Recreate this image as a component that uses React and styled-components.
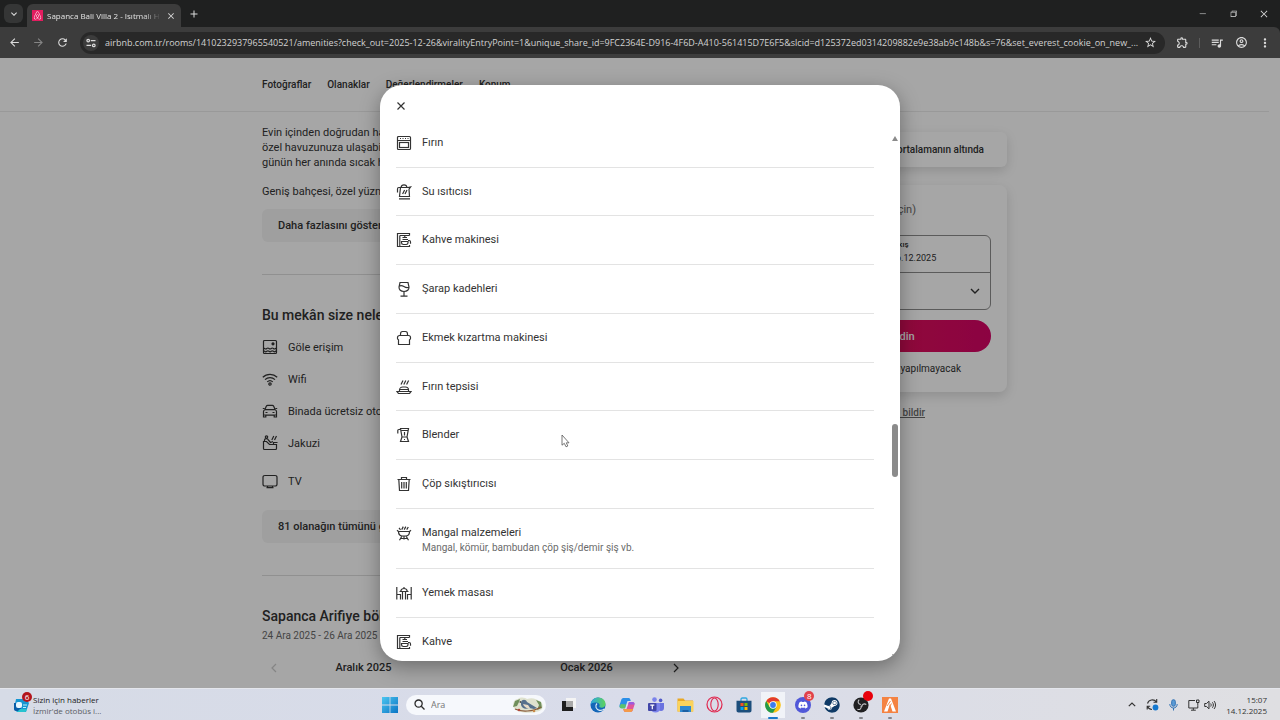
import React from "react";
import styled, { createGlobalStyle, css } from "styled-components";
import {
  MdArrowBack,
  MdArrowForward,
  MdRefresh,
  MdStarBorder,
  MdOutlineExtension,
  MdQueueMusic,
  MdOutlineAccountCircle,
  MdMoreVert,
  MdClose,
  MdAdd,
  MdKeyboardArrowDown,
} from "react-icons/md";
import { VscChromeMinimize, VscChromeRestore, VscChromeClose } from "react-icons/vsc";
import { FaAirbnb, FaDiscord, FaSteam } from "react-icons/fa";

const url =
  "airbnb.com.tr/rooms/1410232937965540521/amenities?check_out=2025-12-26&viralityEntryPoint=1&unique_share_id=9FC2364E-D916-4F6D-A410-561415D7E6F5&slcid=d125372ed0314209882e9e38ab9c148b&s=76&set_everest_cookie_on_new_...";

// 16x16 line drawings
const drawings = {
  oven: (
    <>
      <rect x="1.5" y="1.5" width="13" height="13" rx="1" />
      <path d="M1.5 5.5h13M4 3.5h1M6.5 3.5h1M9 3.5h1M11.5 3.5h1" />
      <rect x="3.5" y="7.5" width="9" height="5" />
    </>
  ),
  kettle: (
    <>
      <path d="M4.500 3.500h7.500l2.600-.6-1.600 2.200.5 7.400H3.500z" />
      <path d="M5 3.500C5.500 0 10.500 0 11 3.500M4.300 3.500H2.800c-1 0-1.300.6-1.300 1.400V8.500M3 14.800h11M6.600 10l2-4M9 10l2-4" />
    </>
  ),
  coffee: (
    <>
      <path d="M13.500 3.500v-2h-12v13h12v-1.500M3.800 3.500v11M3.800 3.500h9.700M6.500 5.500h4.500M8.800 3.500v2" />
      <path d="M6.500 7.500h5.500M5.500 9.500h6.500v1.300c0 1-.7 1.700-1.800 1.700H7.400c-1.100 0-1.900-.7-1.900-1.700zM12 8.500h1.200c.8 0 1.300.5 1.300 1.300v2" />
    </>
  ),
  wine: (
    <path d="M4 1.500h8l1 4.600c0 2.500-2 4.400-5 4.400s-5-1.900-5-4.400zM8 10.500v4.500M4.500 15.200h7M2.900 5.200c1.800-1 3.300-.8 5 .3s3.300 1.600 4.900.8" />
  ),
  toaster: (
    <path d="M4.500 5.500V4c0-1.500.8-2.500 2-2.500h3c1.200 0 2 1 2 2.500v1.500M3.500 5.500h9c1.200 0 2 .9 2 2v1c0 .7-.4 1-1 1.300v4.700h-11V9.800c-.6-.3-1-.6-1-1.300v-1c0-1.100.8-2 2-2z" />
  ),
  tray: (
    <>
      <path d="M5 5.500l2-4M7.800 5.500l2-4M10.600 5.500l2-4" />
      <path d="M3.500 12.300V11c0-1.800 1.500-3 3.200-3h2.600c1.700 0 3.200 1.200 3.200 3v1.300M3.500 10.500h9M1 12.500h14l-1.200 1.600c-.2.300-.5.400-.8.400H3c-.3 0-.6-.1-.8-.4z" />
    </>
  ),
  blender: (
    <path d="M4.500 1.500h8l-1.500 8.500H6zM4 2.500H2.800c-.7 0-1 .4-1 1.100V6.500M5.500 3.500h6.500M8.500 5v3.500M6 10l-1.500 4.500h8L11 10M8 12.500h1" />
  ),
  bin: <path d="M1.500 3.500h13M5.500 3.500v-2h5v2M2.800 3.500l.7 11h9l.7-11M5.700 6v6.500M8 6v6.500M10.300 6v6.500" />,
  grill: (
    <>
      <path d="M2.500 6.500h11c0 2.800-1.800 4.500-4 4.500h-3c-2.200 0-4-1.700-4-4.500zM2.500 6.500L1 5.200M13.500 6.500L15 5.200M6 11l-2.500 4.200M10 11l2.500 4.200M4.800 13.500h6.400M8 11v3.500" />
      <path d="M4.500 4.800l-1.500-2M5.700 4.600l1.600-3M8.200 4.600l1.600-3M10.700 4.600l1.600-2.600" />
    </>
  ),
  table: (
    <path d="M.8 2v12.500M15.200 2v12.500M.8 9.500h3.700v5M15.200 9.500h-3.700v5M3.500 6.500h9M6.500 6.500v8M9.500 6.500v8M4.600 6.300c.5-1.700 1.700-2.800 3.400-2.800s2.900 1.100 3.400 2.800M8 3.500V2" />
  ),
  lake: (
    <>
      <rect x="1.5" y="1.5" width="13" height="13" rx="1" />
      <circle cx="11" cy="4.8" r="1" fill="currentColor" />
      <path d="M1.500 9c1.100 0 1.100 1 2.200 1s1.100-1 2.200-1 1.100 1 2.200 1 1.100-1 2.200-1 1.100 1 2.200 1 1-1 2-1M1.500 11.800c1.100 0 1.100 1 2.200 1s1.100-1 2.200-1 1.100 1 2.200 1 1.100-1 2.200-1 1.100 1 2.200 1 1-1 2-1" />
    </>
  ),
  wifi: (
    <>
      <path d="M.8 6.200c4-3.900 10.400-3.900 14.400 0M3 8.600c2.800-2.700 7.200-2.700 10 0M5.200 10.900c1.600-1.500 4-1.500 5.600 0" />
      <circle cx="8" cy="13" r="1.200" />
    </>
  ),
  car: (
    <path d="M1.500 8.500c0-1 .5-1.500 1.300-1.800L4.300 3.200c.3-.6.700-.9 1.300-.9h4.800c.6 0 1 .3 1.300.9l1.500 3.500c.8.300 1.300.8 1.300 1.800v5.500h-2.300v-1.800H3.800V14H1.500zM2.800 6.700h10.400M.8 5.500h1.700M13.500 5.500h1.700M3.500 9.500h2M10.500 9.500h2M1.500 12h13" />
  ),
  tub: (
    <>
      <path d="M1.500 6.500h3l3 3h7v4c0 .6-.4 1-1 1h-11c-.6 0-1-.4-1-1zM2.500 6.500V5c0-1.800 3.500-1.800 3.800 0L8.500 7.500l2.500-1M11.500 9.500v-2h4" />
      <circle cx="4.500" cy="2" r="1.200" />
      <path d="M9.800 5l2-4M12.500 5l2-4" />
    </>
  ),
  tv: <path d="M3 2.500h10c1.100 0 2 .8 2 1.800v6.900c0 1-.9 1.800-2 1.800H3c-1.100 0-2-.8-2-1.800V4.300c0-1 .9-1.800 2-1.800zM5.500 13v1.500M10.500 13v1.500M4.500 14.700h7" />,
};

function LineIcon({ name }) {
  return (
    <LineSvg viewBox="0 0 16 16" aria-hidden="true">
      {drawings[name]}
    </LineSvg>
  );
}

const amenities = [
  { icon: "oven", name: "Fırın" },
  { icon: "kettle", name: "Su ısıtıcısı" },
  { icon: "coffee", name: "Kahve makinesi" },
  { icon: "wine", name: "Şarap kadehleri" },
  { icon: "toaster", name: "Ekmek kızartma makinesi" },
  { icon: "tray", name: "Fırın tepsisi" },
  { icon: "blender", name: "Blender" },
  { icon: "bin", name: "Çöp sıkıştırıcısı" },
  { icon: "grill", name: "Mangal malzemeleri", note: "Mangal, kömür, bambudan çöp şiş/demir şiş vb." },
  { icon: "table", name: "Yemek masası" },
  { icon: "coffee", name: "Kahve" },
];

const highlights = [
  { icon: "lake", name: "Göle erişim" },
  { icon: "wifi", name: "Wifi" },
  { icon: "car", name: "Binada ücretsiz otopark" },
  { icon: "tub", name: "Jakuzi" },
  { icon: "tv", name: "TV" },
];

function Browser() {
  return (
    <header>
      <TabStrip>
        <TabSearch aria-label="Sekme ara">
          <MdKeyboardArrowDown size={12} />
        </TabSearch>
        <Tab>
          <Favicon>
            <FaAirbnb size={9} />
          </Favicon>
          <TabTitle>Sapanca Bali Villa 2 - Isıtmalı H</TabTitle>
          <BarButton $size={12} aria-label="Sekmeyi kapat">
            <MdClose size={10} />
          </BarButton>
        </Tab>
        <BarButton $size={26} aria-label="Yeni sekme">
          <MdAdd size={12} />
        </BarButton>
        <WindowControls>
          <BarButton $size={14} aria-label="Simge durumuna küçült">
            <VscChromeMinimize size={9} />
          </BarButton>
          <BarButton $size={14} aria-label="Geri yükle">
            <VscChromeRestore size={9} />
          </BarButton>
          <BarButton $size={14} aria-label="Kapat">
            <VscChromeClose size={10} />
          </BarButton>
        </WindowControls>
      </TabStrip>
      <Toolbar>
        <BarButton $size={24} aria-label="Geri">
          <MdArrowBack size={13} />
        </BarButton>
        <BarButton $size={24} $dim aria-label="İleri">
          <MdArrowForward size={13} />
        </BarButton>
        <BarButton $size={24} aria-label="Yenile">
          <MdRefresh size={13} />
        </BarButton>
        <AddressBar>
          <SiteInfo aria-label="Site bilgileri">
            <svg width="10" height="10" viewBox="0 0 10 10" fill="none" stroke="currentColor" strokeWidth="1.2">
              <circle cx="2.2" cy="2.6" r="1.3" />
              <path d="M4.800 2.600H9.500M.5 7.400h4.700" />
              <circle cx="7.8" cy="7.4" r="1.3" />
            </svg>
          </SiteInfo>
          <AddressInput aria-label="Adres" defaultValue={url} spellCheck="false" />
          <BarButton $size={16} aria-label="Yer işareti">
            <MdStarBorder size={13} />
          </BarButton>
        </AddressBar>
        <ToolbarEnd>
          <BarButton $size={18} aria-label="Uzantılar">
            <MdOutlineExtension size={13} />
          </BarButton>
          <Divider />
          <BarButton $size={18} aria-label="Medya">
            <MdQueueMusic size={14} />
          </BarButton>
          <BarButton $size={18} aria-label="Profil">
            <MdOutlineAccountCircle size={13} />
          </BarButton>
          <BarButton $size={18} aria-label="Menü">
            <MdMoreVert size={14} />
          </BarButton>
        </ToolbarEnd>
      </Toolbar>
    </header>
  );
}

function Listing() {
  return (
    <ListingPage>
      <SectionNav>
        <SectionLinks>
          <a href="#photos">Fotoğraflar</a>
          <a href="#amenities">Olanaklar</a>
          <a href="#reviews">Değerlendirmeler</a>
          <a href="#location">Konum</a>
        </SectionLinks>
      </SectionNav>
      <Columns>
        <Details>
          <Section>
            <Paragraph>
              Evin içinden doğrudan havuza
              <br />
              özel havuzunuza ulaşabilir
              <br />
              günün her anında sıcak havuz
            </Paragraph>
            <Paragraph>Geniş bahçesi, özel yüzme</Paragraph>
            <SoftButton>Daha fazlasını göster</SoftButton>
          </Section>
          <Section>
            <Heading>Bu mekân size neler sunuyor</Heading>
            <HighlightList>
              {highlights.map((item) => (
                <Highlight key={item.name}>
                  <LineIcon name={item.icon} />
                  {item.name}
                </Highlight>
              ))}
            </HighlightList>
            <SoftButton>81 olanağın tümünü göster</SoftButton>
          </Section>
          <Section>
            <Heading>Sapanca Arifiye bölgesinde 2 gece</Heading>
            <DateRange>24 Ara 2025 - 26 Ara 2025</DateRange>
            <Months>
              <Month>
                <MonthArrow aria-label="Önceki ay" disabled>
                  <svg width="6" height="10" viewBox="0 0 6 10" fill="none" stroke="currentColor" strokeWidth="1.2">
                    <path d="M5 1L1 5l4 4" />
                  </svg>
                </MonthArrow>
                <span>Aralık 2025</span>
              </Month>
              <Month>
                <span>Ocak 2026</span>
                <MonthArrow aria-label="Sonraki ay">
                  <svg width="6" height="10" viewBox="0 0 6 10" fill="none" stroke="currentColor" strokeWidth="1.2">
                    <path d="M1 1l4 4-4 4" />
                  </svg>
                </MonthArrow>
              </Month>
            </Months>
          </Section>
        </Details>
        <Aside>
          <DealCard>Fiyat ortalamanın altında</DealCard>
          <BookingCard>
            <Price>(2 gece için)</Price>
            <Fields>
              <DateField>
                <small>Giriş</small>
                24.12.2025
              </DateField>
              <DateField>
                <small>Çıkış</small>
                26.12.2025
              </DateField>
              <GuestField>
                <svg width="10" height="6" viewBox="0 0 10 6" fill="none" stroke="currentColor" strokeWidth="1.4">
                  <path d="M1 1l4 4 4-4" />
                </svg>
              </GuestField>
            </Fields>
            <ReserveButton>Rezerve edin</ReserveButton>
            <Note>Henüz sizden ödeme yapılmayacak</Note>
          </BookingCard>
          <ReportLink href="#report">Bu ilanı bildir</ReportLink>
        </Aside>
      </Columns>
    </ListingPage>
  );
}

function AmenitiesDialog() {
  return (
    <Scrim>
      <Dialog role="dialog" aria-modal="true">
        <DialogBar>
          <CloseButton aria-label="Kapat">
            <svg width="8" height="8" viewBox="0 0 8 8" fill="none" stroke="currentColor" strokeWidth="1.2">
              <path d="M.5.5l7 7M7.500.5l-7 7" />
            </svg>
          </CloseButton>
        </DialogBar>
        <AmenityList>
          {amenities.map((item) => (
            <Amenity key={item.name} $tall={!!item.note}>
              <LineIcon name={item.icon} />
              <div>
                <AmenityName>{item.name}</AmenityName>
                {item.note && <AmenityNote>{item.note}</AmenityNote>}
              </div>
            </Amenity>
          ))}
        </AmenityList>
        <Scrollbar aria-hidden="true">
          <ScrollArrow />
          <ScrollThumb />
          <ScrollArrow $down />
        </Scrollbar>
      </Dialog>
      <Cursor viewBox="0 0 9 14" aria-hidden="true">
        <path d="M1 1v10.200l2.300-1.900L5 12.800l1.800-.8-1.500-3.200H8z" />
      </Cursor>
    </Scrim>
  );
}

function Taskbar() {
  return (
    <TaskbarRow>
      <News href="#news">
        <NewsIcon>
          <svg width="16" height="16" viewBox="0 0 16 16">
            <path d="M3 2h10l3 4-3 9H4l-3-3z" fill="#1596d2" />
            <path d="M1 6h7v8H3a2 2 0 0 1-2-2z" fill="#0b5ea8" />
            <rect x="3" y="5" width="6" height="6" rx="2" fill="#eaf8ff" />
            <path d="M10 8h4M10 10.500h3" stroke="#bdf1fb" strokeWidth="1.2" />
            <path d="M4 15l3-3h7l-1.500 3z" fill="#27c3cf" />
          </svg>
          <Badge $color="#b3151c">6</Badge>
        </NewsIcon>
        <NewsText>
          <strong>Sizin için haberler</strong>
          <span>İzmir'de otobüs i...</span>
        </NewsText>
      </News>

      <Apps>
        <StartButton aria-label="Başlat">
          <svg width="16" height="16" viewBox="0 0 16 16">
            <defs>
              <linearGradient id="win" x1="0" y1="0" x2="1" y2="1">
                <stop offset="0" stopColor="#4cc6f0" />
                <stop offset="1" stopColor="#0a74c4" />
              </linearGradient>
            </defs>
            <path d="M0 0h7.600v7.600H0zM8.400 0H16v7.600H8.400zM0 8.400h7.600V16H0zM8.400 8.400H16V16H8.400z" fill="url(#win)" />
          </svg>
        </StartButton>
        <SearchBox>
          <svg width="11" height="11" viewBox="0 0 11 11" fill="none" stroke="#2b2b2b" strokeWidth="1.3">
            <circle cx="4.6" cy="4.6" r="3.6" />
            <path d="M7.300 7.300L10.500 10.500" />
          </svg>
          <input aria-label="Ara" placeholder="Ara" />
          <svg width="32" height="18" viewBox="0 0 32 18">
            <path d="M2 12C0 8 2 3 6 3c3-3 8-1 9 0 5-2 10 0 12 2 4 1 5 7 2 9-6 4-22 4-27-2z" fill="#dfe2cf" />
            <path d="M3 5l5-2-1 3-2 4-4 1zM24 4l5 2 1 6-5 2 2-5z" fill="#6f8f5b" />
            <path d="M3 13c6 3 18 3 26-2" stroke="#8a5a3a" strokeWidth="1.2" fill="none" />
            <path d="M9 6c1-3 5-3 6 0l10 6-3 1-5-1c-4 2-7 0-8-3z" fill="#56708c" />
            <path d="M11 8c1 3 4 5 7 4l-2-3z" fill="#e8dcc8" />
            <path d="M7 6l2-1v2z" fill="#333" />
            <circle cx="7" cy="14" r="1.3" fill="#b5463a" />
            <circle cx="22" cy="15" r="1.3" fill="#c98a4a" />
          </svg>
        </SearchBox>

        <App aria-label="Görev görünümü">
          <svg width="16" height="16" viewBox="0 0 16 16">
            <rect x="5" y="1" width="10" height="10" fill="#f4f4f4" />
            <path d="M1 4h4v6h7v4H1z" fill="#1e1e1e" />
            <rect x="5" y="4" width="7" height="6" fill="#a9a9a9" />
          </svg>
        </App>
        <App aria-label="Edge">
          <svg width="16" height="16" viewBox="0 0 16 16">
            <defs>
              <linearGradient id="edge" x1="0" y1="0" x2="1" y2="0">
                <stop offset="0" stopColor="#2aa7e0" />
                <stop offset="1" stopColor="#5fd35a" />
              </linearGradient>
            </defs>
            <circle cx="8" cy="8" r="7.5" fill="#1366b8" />
            <path d="M.6 7.500C1 3.300 4.400.5 8 .5c4.300 0 7.500 3 7.500 6.300 0 2.500-1.800 3.900-3.800 3.900-1.700 0-2.800-.7-2.400-1.400.7-.9.600-3-1.900-3.600C4.300 5.100 1.400 6 .6 7.500z" fill="url(#edge)" />
            <path d="M7 6.500c-2.500 2.500-.8 6.300 2.500 6.800 1.800.3 3.500-.2 4.800-1.200" stroke="#d8e9f5" strokeWidth="1.2" fill="none" />
          </svg>
        </App>
        <App aria-label="Copilot">
          <svg width="16" height="16" viewBox="0 0 16 16">
            <path d="M5 1h4.500c1 0 1.500.6 1.800 1.500l.5 1.500H8.500L6 11H2.500C.8 11 0 9.500.6 8l1.600-5C2.700 1.600 3.500 1 5 1z" fill="#2b8fe8" />
            <path d="M2 7l-1.300 2c-.4 1.300.6 2.500 2 2.500H6l1-4z" fill="#5cc26d" />
            <path d="M11 15H6.500c-1 0-1.500-.6-1.800-1.500L4.200 12h3.300L10 5h3.500c1.700 0 2.500 1.500 1.900 3l-1.600 5c-.5 1.400-1.300 2-2.800 2z" fill="#e0569a" />
            <path d="M11 15H6.500c-1 0-1.500-.6-1.800-1.500L4.200 12h9.900l-.3 1c-.5 1.400-1.300 2-2.800 2z" fill="#f39a4a" />
            <path d="M10 5h3.500c1.700 0 2.200 1.200 1.900 2.500H9z" fill="#9a5be0" />
          </svg>
        </App>
        <App aria-label="Teams">
          <svg width="16" height="16" viewBox="0 0 16 16">
            <circle cx="6.5" cy="2.6" r="2.3" fill="#7b83eb" />
            <circle cx="12.6" cy="3.4" r="1.8" fill="#5059c9" />
            <path d="M10 6h6v5c0 2-1.200 3-3 3s-3-1-3-3z" fill="#6a72e0" />
            <path d="M3 6h9v5.500c0 2.400-1.800 4-4.500 4S3 13.900 3 11.500z" fill="#7b83eb" />
            <rect x="0" y="6" width="8.500" height="8" rx="1" fill="#4146a8" />
            <path d="M2.300 8.200h4M4.300 8.200v4" stroke="#fff" strokeWidth="1.2" />
          </svg>
        </App>
        <App aria-label="Dosya Gezgini">
          <svg width="17" height="16" viewBox="0 0 17 16">
            <path d="M.5 1.500h6l1.500 2h8v11H.5z" fill="#e9a824" />
            <path d="M.5 4h16v10.500H.5z" fill="#fbd35c" />
            <path d="M3 9h11v6H3z" fill="#2f88d0" />
            <path d="M5.500 13h6v2h-6z" fill="#1c5fa3" />
          </svg>
        </App>
        <App aria-label="Opera">
          <svg width="17" height="17" viewBox="0 0 17 17" fill="none" stroke="#e0284f">
            <circle cx="8.5" cy="8.5" r="7.5" strokeWidth="1.2" />
            <ellipse cx="8.5" cy="8.5" rx="3.7" ry="6.5" strokeWidth="1.1" />
          </svg>
        </App>
        <App aria-label="Microsoft Store">
          <svg width="16" height="16" viewBox="0 0 16 16">
            <path d="M5 4V2.300C5 1.500 5.500 1 6.300 1h3.400c.8 0 1.300.5 1.300 1.300V4" stroke="#2fa8e0" strokeWidth="1.3" fill="none" />
            <path d="M.5 3.800h15v9.700c0 1.200-.8 2-2 2h-11c-1.200 0-2-.8-2-2z" fill="#1c4e7c" />
            <path d="M4.500 6h3v3h-3z" fill="#f25022" />
            <path d="M8.500 6h3v3h-3z" fill="#7fba00" />
            <path d="M4.500 10h3v3h-3z" fill="#00a4ef" />
            <path d="M8.500 10h3v3h-3z" fill="#ffb900" />
          </svg>
        </App>
        <App $active aria-label="Chrome">
          <svg width="16" height="16" viewBox="0 0 16 16">
            <circle cx="8" cy="8" r="7.8" fill="#fbc116" />
            <path d="M8 8L1.200 4.200A7.800 7.800 0 0 1 14.800 4.200H8z" fill="#e33b2e" />
            <path d="M1.200 4.100A7.800 7.800 0 0 0 8 15.800L11.400 10 4.600 10z" fill="#229a4b" />
            <circle cx="8" cy="8" r="3.7" fill="#fff" />
            <circle cx="8" cy="8" r="2.9" fill="#3b7ded" />
          </svg>
        </App>
        <App $open aria-label="Discord">
          <Disc $color="#5158d8">
            <FaDiscord size={10} />
          </Disc>
          <Badge $color="#e2434b">8</Badge>
        </App>
        <App $open aria-label="Steam">
          <SteamMark>
            <FaSteam size={16} />
          </SteamMark>
        </App>
        <App $open aria-label="OBS Studio">
          <svg width="16" height="16" viewBox="0 0 16 16">
            <circle cx="8" cy="8" r="7.6" fill="#202022" />
            <g fill="none" stroke="#c4c4c8" strokeWidth="1.1">
              <path d="M6.200 2.600C4.300 4.400 5 7 7.800 7.600" />
              <path d="M13.300 7.400c-2.400-1.300-4.700 0-4.600 2.700" />
              <path d="M4.400 12.300c2.500.8 4.500-1 3.600-3.500" />
            </g>
          </svg>
          <Badge $color="#e8000b" />
        </App>
        <App $open aria-label="FiveM">
          <svg width="16" height="16" viewBox="0 0 16 16">
            <rect width="16" height="16" fill="#f48342" />
            <path d="M7 1.500h2l5 13h-3.500L8 7l-2.500 7.500H2z" fill="#fff" />
            <path d="M8.500 4L5 9M9.500 6.500l-1.800 3" stroke="#f48342" strokeWidth=".9" />
          </svg>
        </App>
      </Apps>

      <Tray>
        <svg width="8" height="5" viewBox="0 0 8 5" fill="none" stroke="#333" strokeWidth="1.2">
          <path d="M.8 4.200L4 1l3.200 3.200" />
        </svg>
        <svg width="13" height="13" viewBox="0 0 13 13" fill="none" stroke="#333" strokeWidth="1.1">
          <path d="M1.500 5.500C2.500 1.500 8 .5 10.500 4M10.700 1v3.300H7.500M1.200 11.500V8.300h3M1.500 8.500C2.500 10.500 4 11.500 6 11.500" />
          <circle cx="9.5" cy="9.5" r="2.9" fill="#1478cf" stroke="none" />
        </svg>
        <svg width="9" height="12" viewBox="0 0 9 12" fill="none" stroke="#3272b4">
          <rect x="2.7" y=".7" width="3.6" height="6.6" rx="1.8" fill="#5b9bd5" />
          <path d="M.8 5c0 5.300 7.400 5.300 7.400 0M4.500 9v2.500" />
        </svg>
        <TrayPair>
          <svg width="12" height="12" viewBox="0 0 12 12" fill="none" stroke="#333">
            <path d="M7 1.500H.8v7.500h9V6.500M3 11.200h4.800M5.300 9v2" />
            <path d="M8.500 1v2.500h2.500V1zM9.800 3.500v3" />
          </svg>
          <svg width="12" height="10" viewBox="0 0 12 10" fill="none" stroke="#333">
            <path d="M.7 3.500h1.800L5 1.200v7.600L2.500 6.500H.7zM6.700 3.500c.6.900.6 2.100 0 3M8.400 2.300c1.300 1.600 1.300 3.800 0 5.400M10 1c2 2.400 2 5.600 0 8" />
          </svg>
        </TrayPair>
        <Clock>
          <span>15:07</span>
          <span>14.12.2025</span>
        </Clock>
      </Tray>
    </TaskbarRow>
  );
}

function Screen() {
  return (
    <>
      <GlobalStyle />
      <Desktop>
        <Browser />
        <Viewport>
          <Listing />
          <AmenitiesDialog />
        </Viewport>
        <Taskbar />
      </Desktop>
    </>
  );
}

const GlobalStyle = createGlobalStyle`
  * {
    box-sizing: border-box;
  }
  body {
    margin: 0;
    overflow: hidden;
    font-family: Roboto, "Liberation Sans", sans-serif;
    font-size: 11px;
    color: #333;
  }
  button, input {
    border: 0;
    padding: 0;
    margin: 0;
    background: none;
    font: inherit;
    color: inherit;
  }
  svg {
    display: block;
    flex: none;
  }
`;

const systemFont = css`
  font-family: "Open Sans", "Noto Sans", sans-serif;
  font-size: 9px;
`;

const Desktop = styled.div`
  display: flex;
  flex-direction: column;
  height: 100vh;
`;

const LineSvg = styled.svg`
  width: 16px;
  height: 16px;
  fill: none;
  stroke: currentColor;
  stroke-width: 1.2;
`;

/* browser */
const TabStrip = styled.div`
  ${systemFont}
  display: flex;
  align-items: center;
  height: 27px;
  padding: 0 9px 0 4px;
  background: #1f2020;
  color: #e3e3e3;
`;
const BarButton = styled.button`
  display: flex;
  align-items: center;
  justify-content: center;
  flex: none;
  width: ${(p) => p.$size}px;
  height: 20px;
  color: ${(p) => (p.$dim ? "#858585" : "#dcdcdc")};
`;
const TabSearch = styled(BarButton)`
  width: 19px;
  height: 19px;
  margin-right: 4px;
  border-radius: 6px;
  background: #353636;
`;
const Tab = styled.div`
  display: flex;
  align-items: center;
  align-self: flex-end;
  gap: 4px;
  width: 154px;
  height: 23px;
  padding: 0 4px 0 5px;
  border-radius: 6px 6px 0 0;
  background: #3c3c3c;
`;
const Favicon = styled.span`
  display: flex;
  align-items: center;
  justify-content: center;
  flex: none;
  width: 11px;
  height: 11px;
  background: #e31c5f;
  color: #fff;
`;
const TabTitle = styled.span`
  flex: 1;
  font-size: 8px;
  white-space: nowrap;
  mask-image: linear-gradient(to right, #000 85%, transparent);
`;
const WindowControls = styled.div`
  display: flex;
  gap: 17px;
  margin-left: auto;
`;
const Toolbar = styled.div`
  ${systemFont}
  display: flex;
  align-items: center;
  height: 31px;
  padding: 0 6px 0 2px;
  background: #3c3c3c;
  border-radius: 0 6px 0 0;
  box-shadow: 6px -6px 0 #1f2020;
`;
const AddressBar = styled.div`
  display: flex;
  align-items: center;
  flex: 1;
  height: 22px;
  margin-left: 6px;
  padding: 0 7px 0 3px;
  border-radius: 11px;
  background: #282828;
`;
const SiteInfo = styled.button`
  display: flex;
  align-items: center;
  justify-content: center;
  width: 16px;
  height: 16px;
  margin-right: 6px;
  border-radius: 50%;
  background: #3c3c3c;
  color: #dcdcdc;
`;
const AddressInput = styled.input`
  flex: 1;
  min-width: 0;
  color: #d2d2d2;
  text-overflow: ellipsis;
  outline: none;
`;
const ToolbarEnd = styled.div`
  display: flex;
  align-items: center;
  gap: 6px;
  margin-left: 8px;
`;
const Divider = styled.span`
  width: 1px;
  height: 10px;
  margin: 0 2px;
  background: #5c5c5c;
`;

/* listing page behind the dialog */
const Viewport = styled.main`
  position: relative;
  flex: 1;
  min-height: 0;
  overflow: hidden;
  background: #fff;
`;
const ListingPage = styled.div`
  margin-right: 11px;
`;
const SectionNav = styled.nav`
  height: 54px;
  border-bottom: 1px solid #ebebeb;
`;
const SectionLinks = styled.div`
  display: flex;
  align-items: center;
  gap: 16px;
  max-width: 745px;
  height: 100%;
  margin: 0 auto;
  font-size: 10px;
  font-weight: 500;
  a {
    color: inherit;
    text-decoration: none;
  }
`;
const Columns = styled.div`
  display: flex;
  justify-content: space-between;
  max-width: 745px;
  margin: 0 auto;
`;
const Details = styled.div`
  width: 426px;
`;
const Section = styled.section`
  padding: 31px 0 32px;
  border-bottom: 1px solid #ddd;
  &:first-child {
    padding-top: 13px;
  }
`;
const Paragraph = styled.p`
  margin: 0 0 14px;
  line-height: 15px;
  & + & {
    margin-bottom: 10px;
  }
`;
const SoftButton = styled.button`
  height: 33px;
  padding: 0 16px;
  border-radius: 6px;
  background: #f4f4f4;
  font-weight: 500;
`;
const Heading = styled.h2`
  margin: 0;
  font-size: 14px;
  line-height: 18px;
  font-weight: 500;
`;
const HighlightList = styled.ul`
  margin: 7px 0 13px;
  padding: 0;
  list-style: none;
`;
const Highlight = styled.li`
  display: flex;
  align-items: center;
  gap: 10px;
  height: 32px;
  &:last-child {
    margin-top: 6px;
  }
`;
const DateRange = styled.p`
  margin: 4px 0 18px;
  font-size: 10px;
  line-height: 14px;
  color: #6a6a6a;
`;
const Months = styled.div`
  display: grid;
  grid-template-columns: 1fr 1fr;
  margin: 0 -10px;
  font-weight: 500;
`;
const Month = styled.div`
  display: grid;
  grid-template-columns: 44px 1fr 44px;
  align-items: center;
  span {
    grid-column: 2;
    text-align: center;
  }
`;
const MonthArrow = styled.button`
  display: flex;
  justify-content: center;
  &:disabled {
    color: #ccc;
  }
`;

const Aside = styled.aside`
  width: 248px;
  padding-top: 20px;
`;
const DealCard = styled.div`
  height: 35px;
  padding-right: 23px;
  border-radius: 6px;
  box-shadow: 0 4px 12px rgba(0, 0, 0, 0.14);
  font-size: 10px;
  font-weight: 500;
  line-height: 35px;
  text-align: right;
`;
const BookingCard = styled.div`
  display: flex;
  flex-direction: column;
  margin-top: 18px;
  padding: 16px;
  border-radius: 8px;
  box-shadow: 0 4px 12px rgba(0, 0, 0, 0.14);
`;
const Price = styled.div`
  padding-right: 75px;
  color: #6a6a6a;
  line-height: 18px;
  text-align: right;
`;
const Fields = styled.div`
  display: grid;
  grid-template-columns: 1fr 1fr;
  margin-top: 16px;
  border: 1px solid #8c8c8c;
  border-radius: 6px;
`;
const DateField = styled.div`
  display: flex;
  flex-direction: column;
  height: 37px;
  padding: 3px 8px;
  font-size: 9px;
  line-height: 14px;
  border-bottom: 1px solid #8c8c8c;
  small {
    font-size: 8px;
    font-weight: 500;
    line-height: 12px;
  }
`;
const GuestField = styled.div`
  grid-column: span 2;
  display: flex;
  align-items: center;
  justify-content: flex-end;
  height: 36px;
  padding-right: 10px;
`;
const ReserveButton = styled.button`
  height: 32px;
  margin-top: 10px;
  border-radius: 16px;
  background: linear-gradient(to right, #e61e4d, #d70466);
  color: #fff;
  font-size: 11px;
  font-weight: 500;
`;
const Note = styled.div`
  margin-top: 10px;
  font-size: 10px;
  line-height: 14px;
  text-align: center;
`;
const ReportLink = styled.a`
  display: block;
  margin-top: 14px;
  padding-right: 82px;
  color: #6a6a6a;
  font-size: 10px;
  font-weight: 500;
  line-height: 14px;
  text-align: right;
`;

/* dialog */
const Scrim = styled.div`
  position: absolute;
  inset: 0;
  display: flex;
  align-items: center;
  justify-content: center;
  background: rgba(0, 0, 0, 0.35);
`;
const Dialog = styled.div`
  position: relative;
  display: flex;
  flex-direction: column;
  width: 100%;
  max-width: 520px;
  height: calc(100% - 54px);
  overflow: hidden;
  border-radius: 22px;
  background: #fff;
  box-shadow: 0 6px 20px rgba(0, 0, 0, 0.35);
`;
const DialogBar = styled.div`
  flex: none;
  height: 34px;
  padding: 11px 11px 0;
`;
const CloseButton = styled.button`
  display: flex;
  align-items: center;
  justify-content: center;
  width: 20px;
  height: 20px;
`;
const AmenityList = styled.ul`
  display: flex;
  flex: 1;
  flex-direction: column;
  margin: 0;
  padding: 0 26px 0 16px;
  list-style: none;
`;
const Amenity = styled.li`
  display: flex;
  flex: 1 0 ${(p) => (p.$tall ? 60 : 48)}px;
  gap: 10px;
  padding-top: 16px;
  border-bottom: 1px solid #e3e3e3;
  &:last-child {
    flex: 0 0 43px;
    border-bottom: 0;
  }
`;
const AmenityName = styled.div`
  line-height: 15px;
`;
const AmenityNote = styled.div`
  font-size: 10px;
  line-height: 15px;
  color: #6a6a6a;
`;
const Scrollbar = styled.div`
  position: absolute;
  top: 51px;
  right: 2px;
  bottom: 2px;
  display: flex;
  flex-direction: column;
  align-items: center;
  justify-content: space-between;
  width: 6px;
`;
const ScrollArrow = styled.span`
  border: 3px solid transparent;
  border-top: 0;
  border-bottom: 5px solid #8b8b8b;
  transform: ${(p) => (p.$down ? "rotate(180deg)" : "none")};
`;
const ScrollThumb = styled.span`
  width: 6px;
  height: 10%;
  margin-top: 106px;
  border-radius: 3px;
  background: #8b8b8b;
`;
const Cursor = styled.svg`
  position: absolute;
  left: 561px;
  top: 376px;
  width: 9px;
  height: 14px;
  fill: #fff;
  stroke: #555;
  stroke-width: 0.8;
`;

/* taskbar */
const TaskbarRow = styled.footer`
  ${systemFont}
  display: grid;
  grid-template-columns: 1fr 530px 1fr;
  align-items: center;
  height: 32px;
  background: linear-gradient(to right, #d6dbe6, #d9dcea 50%, #dfdfe2);
  border-top: 1px solid #e4e6ec;
`;
const News = styled.a`
  display: flex;
  align-items: center;
  gap: 4px;
  padding-left: 13px;
  color: #222;
  text-decoration: none;
`;
const NewsIcon = styled.span`
  position: relative;
`;
const Badge = styled.span`
  position: absolute;
  top: -5px;
  right: -3px;
  display: block;
  width: 10px;
  height: 10px;
  border-radius: 50%;
  background: ${(p) => p.$color};
  color: #fff;
  font-size: 8px;
  line-height: 10px;
  text-align: center;
`;
const NewsText = styled.span`
  display: flex;
  flex-direction: column;
  font-size: 8px;
  line-height: 11px;
  strong {
    font-weight: 400;
  }
  span {
    color: #5a5c64;
  }
`;
const Apps = styled.div`
  display: flex;
  align-items: center;
  height: 100%;
  padding-left: 7px;
`;
const App = styled.button`
  position: relative;
  display: flex;
  align-items: center;
  justify-content: center;
  flex: 1;
  height: 26px;
  ${(p) =>
    p.$active &&
    css`
      background: linear-gradient(#f1f3f8, #f1f3f8) center / 24px 26px no-repeat;
    `}
  ${(p) =>
    (p.$active || p.$open) &&
    css`
      &::after {
        content: "";
        position: absolute;
        bottom: -1px;
        width: ${p.$active ? 10 : 4}px;
        height: 2px;
        border-radius: 1px;
        background: ${p.$active ? "#1a78c8" : "#84868c"};
      }
    `}
  ${Badge} {
    top: -1px;
    right: 3px;
  }
`;
const StartButton = styled.button`
  margin-right: 8px;
`;
const SearchBox = styled.label`
  display: flex;
  align-items: center;
  gap: 6px;
  width: 140px;
  height: 20px;
  margin-right: 8px;
  padding: 0 2px 0 8px;
  border-radius: 10px;
  background: #f6f8fc;
  input {
    flex: 1;
    min-width: 0;
    outline: none;
  }
`;
const Disc = styled.span`
  display: flex;
  align-items: center;
  justify-content: center;
  width: 16px;
  height: 16px;
  border-radius: 50%;
  background: ${(p) => p.$color};
  color: #fff;
`;
const SteamMark = styled(Disc)`
  background: #fff;
  color: #103a66;
`;
const Tray = styled.div`
  display: flex;
  align-items: center;
  justify-content: flex-end;
  gap: 10px;
  padding-right: 13px;
`;
const TrayPair = styled.div`
  display: flex;
  align-items: center;
  gap: 4px;
`;
const Clock = styled.div`
  display: flex;
  flex-direction: column;
  align-items: flex-end;
  font-size: 8px;
  line-height: 11px;
`;

export default Screen;
